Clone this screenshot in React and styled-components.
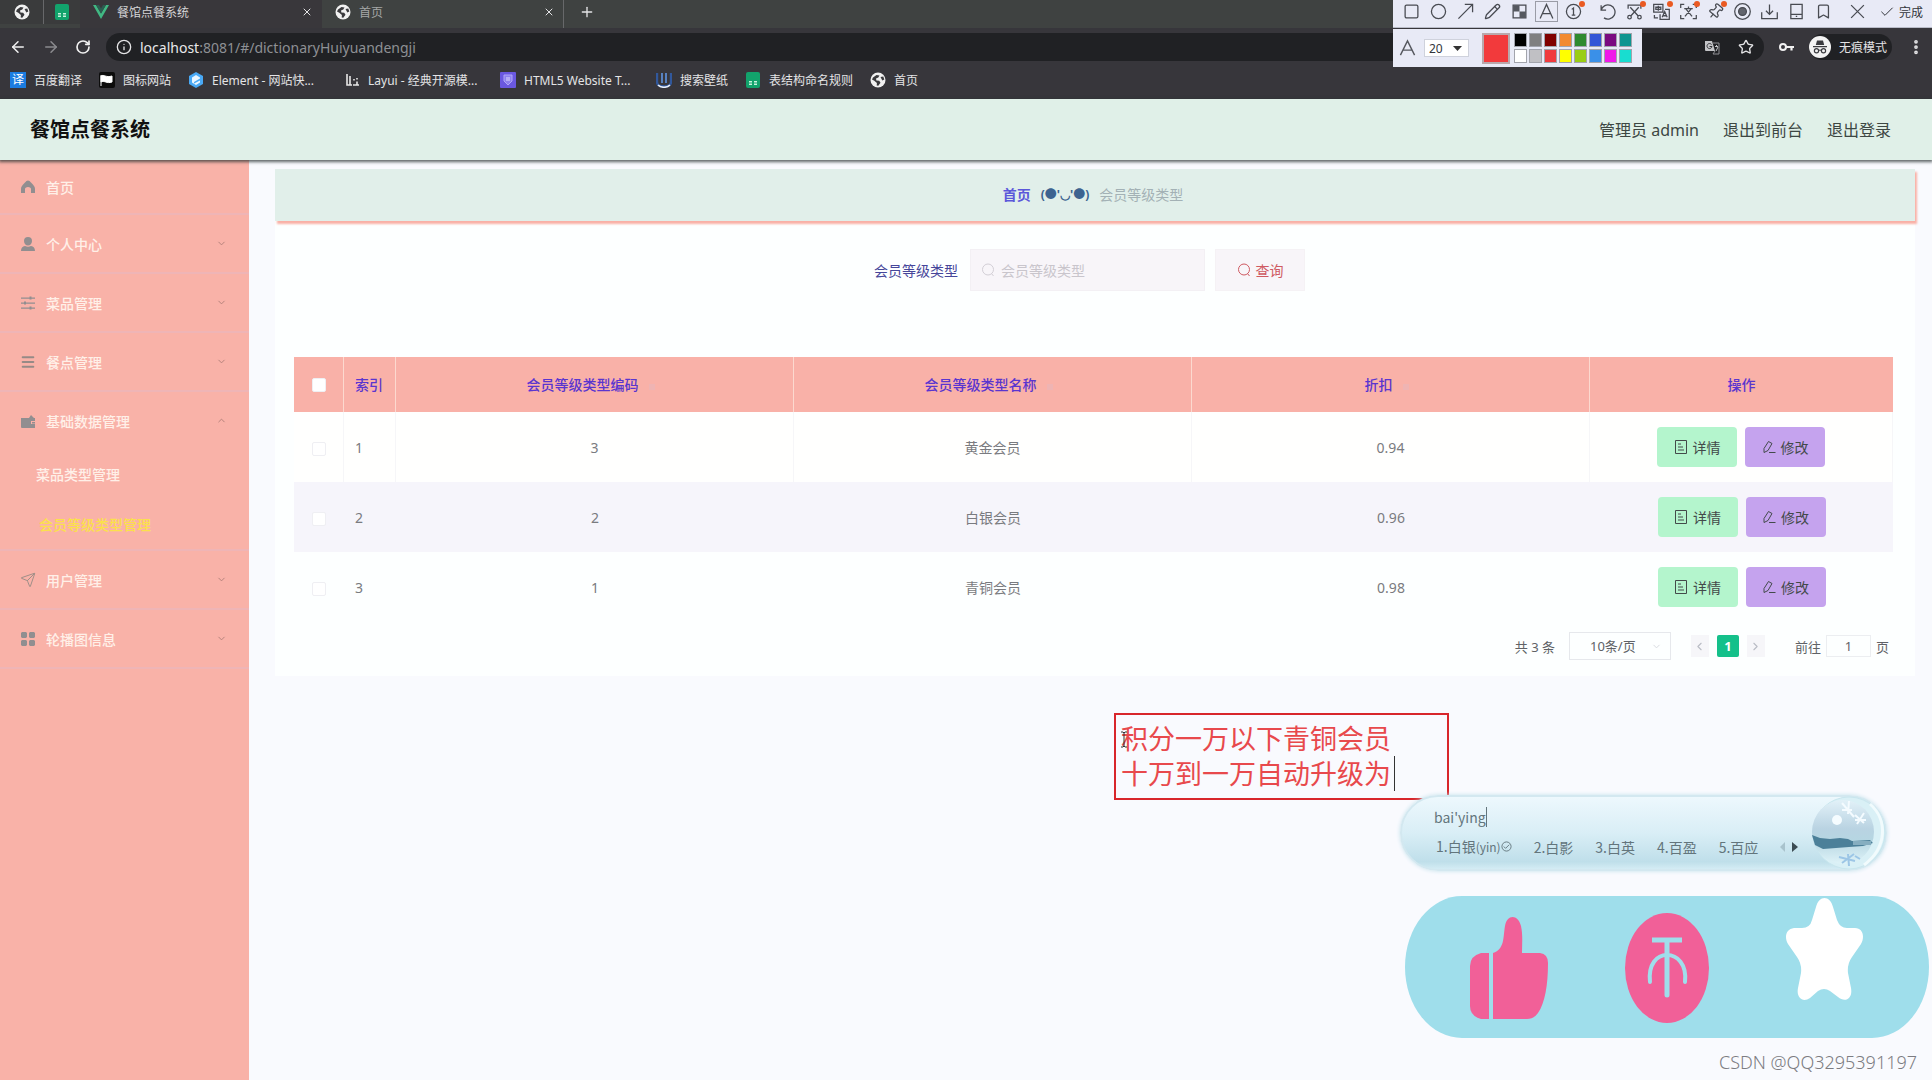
import React, { useState } from 'react';
import styled, { createGlobalStyle } from 'styled-components';
import {
  ArrowLeft,
  ArrowRight,
  Bookmark,
  Check,
  ChevronDown,
  ChevronLeft,
  ChevronRight,
  ChevronUp,
  Circle,
  EllipsisVertical,
  Info,
  Menu,
  Pencil,
  Pin,
  Plus,
  RotateCw,
  Send,
  Square,
  Star,
  X,
} from 'lucide-react';

const bookmarks = [
  { label: '百度翻译', icon: 'fanyi' },
  { label: '图标网站', icon: 'flag' },
  { label: 'Element - 网站快...', icon: 'element', long: true },
  { label: 'Layui - 经典开源模...', icon: 'layui', long: true },
  { label: 'HTML5 Website T...', icon: 'html5', long: true },
  { label: '搜索壁纸', icon: 'wallpaper' },
  { label: '表结构命名规则', icon: 'sheet' },
  { label: '首页', icon: 'globe' },
];

const menu = [
  { label: '首页', icon: 'home' },
  { label: '个人中心', icon: 'user', arrow: true },
  { label: '菜品管理', icon: 'sliders', arrow: true },
  { label: '餐点管理', icon: 'lines', arrow: true },
  {
    label: '基础数据管理',
    icon: 'wallet',
    arrow: true,
    children: ['菜品类型管理', '会员等级类型管理'],
  },
  { label: '用户管理', icon: 'send', arrow: true },
  { label: '轮播图信息', icon: 'grid', arrow: true },
];

const rows = [
  { id: 1, code: 3, name: '黄金会员', discount: '0.94' },
  { id: 2, code: 2, name: '白银会员', discount: '0.96' },
  { id: 3, code: 1, name: '青铜会员', discount: '0.98' },
];

const swatches = [
  '#000000', '#808080', '#800000', '#f28a30', '#2f8a2f', '#3355d6', '#7a0a80', '#0f9590',
  '#ffffff', '#c0c0c4', '#f03a3e', '#ffff00', '#9acd14', '#3a90e8', '#f018e8', '#18ddd0',
];

const tools = [
  { name: '矩形', icon: <Square /> },
  { name: '椭圆', icon: <Circle /> },
  { name: '箭头', icon: <ToolIcon type="arrow" /> },
  { name: '画笔', icon: <Pencil /> },
  { name: '马赛克', icon: <ToolIcon type="mosaic" /> },
  { name: '文字', icon: <ToolIcon type="letter" />, active: true },
  { name: '序号', icon: <ToolIcon type="number" />, dot: true },
  { name: '撤销', icon: <ToolIcon type="undo" />, gap: true },
  { name: '长截图', icon: <ToolIcon type="cut" />, dot: true },
  { name: '翻译', icon: <ToolIcon type="translate" />, dot: true },
  { name: '识别文字', icon: <ToolIcon type="scan" />, dot: true },
  { name: '钉住', icon: <Pin />, dot: true, tilt: true },
  { name: '录屏', icon: <ToolIcon type="record" /> },
  { name: '保存', icon: <ToolIcon type="save" /> },
  { name: '发送到手机', icon: <ToolIcon type="phone" /> },
  { name: '收藏', icon: <Bookmark /> },
  { name: '关闭', icon: <ToolIcon type="close" />, gap: true },
];

function GlobeIcon() {
  return (
    <svg width="16" height="16" viewBox="0 0 16 16">
      <circle cx="8" cy="8" r="7.5" fill="#f1f1f1" />
      <path d="M3 5.500 6.500 3l3 .6-1.200 2L6 6.600l.4 1.800 2.800.4 1.300 2-2.200 3-1.600-.4.2-2.500-2.600-2.100L2 7.500zM10.500 5l2.800-.6 1 3.200-2 .8z" fill="#3a3a3d" />
    </svg>
  );
}

function SheetIcon() {
  return (
    <svg width="16" height="16" viewBox="0 0 16 16">
      <rect x="1" y="0" width="14" height="16" rx="2" fill="#12a36c" />
      <path d="M4 9h3v1.500H4zM9 9h3v1.500H9zM4 11.500h3V13H4zM9 11.500h3V13H9z" fill="#c7f2de" />
    </svg>
  );
}

function BookmarkIcon({ type }) {
  if (type === 'globe') return <GlobeIcon />;
  if (type === 'sheet') return <SheetIcon />;
  if (type === 'fanyi') return <FanyiBadge>译</FanyiBadge>;
  return (
    <svg width="16" height="16" viewBox="0 0 16 16">
      {type === 'flag' && (
        <>
          <rect width="16" height="16" rx="2" fill="#0c0c0c" />
          <path d="M2 3v11M2 4c3-2 5 2 11 0v6c-5 2-8-2-11 0z" fill="#fff" stroke="#fff" />
        </>
      )}
      {type === 'element' && (
        <>
          <path d="M8 0l7 4v8l-7 4-7-4V4z" fill="#49a9f5" />
          <path d="M4 5.500 8 3l4 2.500v1L6 10v1.500l6-3v2L8 13l-4-2.500z" fill="#eaf6ff" />
        </>
      )}
      {type === 'layui' && (
        <path d="M3 2v11h5M6 4v9M9 13h3M10 7v1.500M13 6v1.500M12 13h3M13 9.500V13" stroke="#e6e6e6" strokeWidth="1.6" fill="none" />
      )}
      {type === 'html5' && (
        <>
          <rect width="16" height="16" rx="1" fill="#6a58e0" />
          <path d="M4 3h8v6l-4 4-4-4z" fill="#8d80ee" stroke="#b0a6f8" />
          <path d="M6 6h4M6 8h4" stroke="#e0dcff" />
        </>
      )}
      {type === 'wallpaper' && (
        <>
          <path d="M1 1v9c0 6 14 6 14 0V1" stroke="#31589c" strokeWidth="2.400" fill="none" />
          <path d="M6 1v10M10 1v10" stroke="#5b8ad0" strokeWidth="1.800" />
          <path d="M2 13c3 3 9 3 12 0" stroke="#e8f0fb" strokeWidth="1.600" fill="none" />
        </>
      )}
    </svg>
  );
}

function ToolIcon({ type }) {
  return (
    <svg viewBox="0 0 24 24">
      {type === 'arrow' && <path d="M2 22 22 2M11 2h11v11" />}
      {type === 'mosaic' && (
        <>
          <rect x="3" y="3" width="18" height="18" />
          <path d="M3 3h9v9H3zM12 12h9v9h-9z" fill="#55585f" stroke="none" />
        </>
      )}
      {type === 'letter' && <path d="M3 22 12 2l9 20M6 15h12" />}
      {type === 'number' && (
        <>
          <circle cx="12" cy="12" r="10" />
          <path d="M9.500 9 12 7v10M9.500 17h5" />
        </>
      )}
      {type === 'undo' && <path d="M3 3v7h7M3 10a10 10 0 1 1 4 11" />}
      {type === 'cut' && (
        <>
          <path d="M3 8V3h18v5M6 6l11 12M18 6 7 18" />
          <circle cx="5" cy="20" r="2.500" />
          <circle cx="19" cy="20" r="2.500" />
        </>
      )}
      {type === 'translate' && (
        <path d="M1 2h13v11H1zM7.500 4v7M4 6h7v3H4zM17 9h6v14H10v-7M13 20l3.500-8 3.500 8M14 18h5M2 17v4h5" />
      )}
      {type === 'scan' && (
        <path d="M1 7V2h5M18 2h5v5M23 17v5h-5M6 22H1v-5M6 8h12M12 5v3M16 8 7 19M8 8l9 11" />
      )}
      {type === 'record' && (
        <>
          <circle cx="12" cy="12" r="11" />
          <circle cx="12" cy="12" r="5.500" fill="#62656d" />
        </>
      )}
      {type === 'save' && <path d="M1 13v9h22v-9M12 2v14M7 11l5 5 5-5" />}
      {type === 'phone' && <path d="M4 2h16v20H4zM4 16h16M11 19h2" />}
      {type === 'close' && <path d="M3 3l18 18M21 3 3 21" />}
    </svg>
  );
}

function MenuIcon({ type }) {
  if (type === 'send') return <Send size={16} strokeWidth={1.5} color="#a08f88" />;
  if (type === 'lines') return <Menu size={16} strokeWidth={3} color="#968a86" />;
  return (
    <svg width="16" height="16" viewBox="0 0 16 16" fill="#918e90">
      {type === 'home' && <path d="M8 1.500c1 0 2 .8 3.500 2.500C14 6.500 15 8 15 10v4h-4v-4c0-1-1-2-3-2s-3 1-3 2v4H1v-4c0-2 1-3.500 3.500-6C6 2.300 7 1.500 8 1.500z" />}
      {type === 'user' && <path d="M8 1a4 4 0 0 1 4 4c0 2.500-1.700 4.500-4 4.500S4 7.500 4 5a4 4 0 0 1 4-4zM1 15c0-3 1.500-4.500 4-5 2 1 4 1 6 0 2.500.5 4 2 4 5z" />}
      {type === 'sliders' && <path d="M1 2.500h14v1.200H1zM1 7.500h14v1.200H1zM1 12.500h14v1.200H1zM9.500 1.500h2v3h-2zM4 6.500h2v3H4zM9.500 11.500h2v3h-2z" />}
      {type === 'wallet' && <path d="M1 5h8l2-3 3 3h1v3h-4v3h4v4H2a1 1 0 0 1-1-1zM12 9h3v1.500h-3z" />}
      {type === 'grid' && <path d="M2 1h4l1 1v4l-1 1H2L1 6V2zM10 1h4l1 1v4l-1 1h-4L9 6V2zM2 9h4l1 1v4l-1 1H2l-1-1v-4zM10 9h4l1 1v4l-1 1h-4l-1-1v-4z" />}
    </svg>
  );
}

function SearchIcon() {
  return (
    <svg width="14" height="14" viewBox="0 0 14 14" fill="none" stroke="currentColor">
      <circle cx="7" cy="6.500" r="5.500" />
      <path d="m10.500 10.500 2 2.500" />
    </svg>
  );
}

function DetailIcon() {
  return (
    <svg width="14" height="14" viewBox="0 0 14 14" fill="none" stroke="currentColor">
      <path d="M1.500.5h11v13h-11zM4 4h3M4 7h5M4 10h6" />
    </svg>
  );
}

function EditIcon() {
  return (
    <svg width="14" height="14" viewBox="0 0 14 14" fill="none" stroke="currentColor">
      <path d="M2 8.500 6.500 1.500l3.500 2L6 10.500 2 12.500zM7 12.500h6.500" />
    </svg>
  );
}

function Browser() {
  return (
    <BrowserFrame>
      <TabStrip>
        <PinnedTab $line><GlobeIcon /></PinnedTab>
        <PinnedTab><SheetIcon /></PinnedTab>
        <Tab $active>
          <svg width="16" height="14" viewBox="0 0 16 14">
            <path d="M0 0h3l5 8.500L13 0h3L8 14z" fill="#41b883" />
            <path d="M3 0h3l2 3.500L10 0h3L8 8.500z" fill="#2c5c50" />
          </svg>
          <TabTitle $active>餐馆点餐系统</TabTitle>
          <X size={12} />
        </Tab>
        <Tab>
          <GlobeIcon />
          <TabTitle>首页</TabTitle>
          <X size={12} />
        </Tab>
        <NewTab aria-label="新标签页"><Plus size={16} /></NewTab>
      </TabStrip>
      <Toolbar>
        <NavButton aria-label="后退"><ArrowLeft size={18} /></NavButton>
        <NavButton aria-label="前进" $dim><ArrowRight size={18} /></NavButton>
        <NavButton aria-label="刷新"><RotateCw size={16} strokeWidth={2.5} /></NavButton>
        <AddressBar>
          <Info size={16} />
          <Url><b>localhost</b>:8081/#/dictionaryHuiyuandengji</Url>
          <svg width="15" height="15" viewBox="0 0 15 15">
            <path d="M0 1h7l3 10H1a1 1 0 0 1-1-1z" fill="#c3c4c7" />
            <path d="M8 3h6v11H8l2-3" fill="none" stroke="#8f9094" />
            <path d="M6.500 4.500a2.500 2.500 0 1 0 .5 2H4.500" fill="none" stroke="#303135" />
            <path d="M10 6.500h3M11.500 5v1.500M13 7l-2 4" stroke="#c3c4c7" />
          </svg>
          <Star size={16} />
        </AddressBar>
        <svg width="15" height="10" viewBox="0 0 15 10">
          <circle cx="4" cy="5" r="3" fill="none" stroke="#f1f1f1" strokeWidth="2" />
          <path d="M7 5h8M12.500 5v3.500" stroke="#f1f1f1" strokeWidth="2.200" />
        </svg>
        <Incognito>
          <svg width="22" height="22" viewBox="0 0 22 22">
            <circle cx="11" cy="11" r="11" fill="#f3f3f3" />
            <path d="M8 4.500h6l1.200 4.500H6.800zM4 10h14v1.200H4z" fill="#3a3b3f" />
            <path d="M9.500 14.500q1.500-1 3 0" stroke="#3a3b3f" fill="none" />
            <circle cx="7.500" cy="14.800" r="2.100" stroke="#3a3b3f" strokeWidth="1.200" fill="none" />
            <circle cx="14.500" cy="14.800" r="2.100" stroke="#3a3b3f" strokeWidth="1.200" fill="none" />
          </svg>
          无痕模式
        </Incognito>
        <EllipsisVertical size={18} strokeWidth={3} />
      </Toolbar>
      <BookmarkBar>
        {bookmarks.map((item) => (
          <BookmarkLink key={item.label} href="#" $long={item.long}>
            <BookmarkIcon type={item.icon} />
            <span>{item.label}</span>
          </BookmarkLink>
        ))}
      </BookmarkBar>
    </BrowserFrame>
  );
}

function SnipTools() {
  return (
    <SnipWrap>
      <SnipBar>
        {tools.map((tool) => (
          <SnipButton key={tool.name} aria-label={tool.name} $active={tool.active} $gap={tool.gap} $tilt={tool.tilt}>
            {tool.icon}
            {tool.dot && <Dot />}
          </SnipButton>
        ))}
        <DoneButton><Check size={16} strokeWidth={1.5} />完成</DoneButton>
      </SnipBar>
      <SnipOptions>
        <svg width="17" height="18" viewBox="0 0 24 24" fill="none" stroke="#55585f" strokeWidth="2">
          <path d="M2 22 12 2l10 20M6 15h12" />
        </svg>
        <SizeBox>
          <SizeSelect aria-label="字号" defaultValue="20">
            <option>20</option>
          </SizeSelect>
          <svg width="9" height="5" viewBox="0 0 9 5"><path d="M0 0h9L4.500 5z" fill="#333" /></svg>
        </SizeBox>
        <CurrentColor />
        <Palette>
          {swatches.map((color) => (
            <Swatch key={color} aria-label={color} $color={color} />
          ))}
        </Palette>
      </SnipOptions>
    </SnipWrap>
  );
}

function Sidebar() {
  return (
    <SideNav>
      {menu.map((item, index) => (
        <MenuGroup key={item.label}>
          <MenuLink href="#" $first={index === 0}>
            <MenuIcon type={item.icon} />
            <MenuText>{item.label}</MenuText>
            {item.arrow && (item.children ? <ChevronUp size={11} /> : <ChevronDown size={11} />)}
          </MenuLink>
          {item.children && item.children.map((child, i) => (
            <SubLink key={child} href="#" $active={i === 1}>{child}</SubLink>
          ))}
        </MenuGroup>
      ))}
    </SideNav>
  );
}

function LevelTable() {
  return (
    <Table>
      <colgroup>
        <col width="50" />
        <col width="52" />
        <col />
        <col />
        <col />
        <col width="303" />
      </colgroup>
      <thead>
        <tr>
          <HeadCell><Checkbox type="checkbox" aria-label="全选" /></HeadCell>
          <HeadCell $left>索引</HeadCell>
          <HeadCell>会员等级类型编码<Caret /></HeadCell>
          <HeadCell>会员等级类型名称<Caret /></HeadCell>
          <HeadCell>折扣<Caret /></HeadCell>
          <HeadCell>操作</HeadCell>
        </tr>
      </thead>
      <tbody>
        {rows.map((row) => (
          <BodyRow key={row.id}>
            <Cell><Checkbox type="checkbox" aria-label={`选择 ${row.name}`} /></Cell>
            <Cell $left>{row.id}</Cell>
            <Cell>{row.code}</Cell>
            <Cell>{row.name}</Cell>
            <Cell>{row.discount}</Cell>
            <Cell>
              <Actions>
                <ActionButton $color="#b4f5cd"><DetailIcon />详情</ActionButton>
                <ActionButton $color="#c5a3ee"><EditIcon />修改</ActionButton>
              </Actions>
            </Cell>
          </BodyRow>
        ))}
      </tbody>
    </Table>
  );
}

function Pager() {
  return (
    <Pagination>
      <span>共 3 条</span>
      <PageSize>
        <select aria-label="每页条数" defaultValue="10条/页">
          <option>10条/页</option>
        </select>
        <ChevronDown size={11} color="#d5d8dd" />
      </PageSize>
      <PageArrow aria-label="上一页"><ChevronLeft size={13} /></PageArrow>
      <PageNumber>1</PageNumber>
      <PageArrow aria-label="下一页"><ChevronRight size={13} /></PageArrow>
      <Jump>
        前往
        <input aria-label="页码" defaultValue="1" />
        页
      </Jump>
    </Pagination>
  );
}

function InputMethod() {
  return (
    <ImeBar>
      <ImeText>
        <Composing>bai'ying</Composing>
        <Candidates>
          <span>1.白银<small>(yin)</small>
            <svg width="11" height="11" viewBox="0 0 12 12" fill="none" stroke="#63757c">
              <circle cx="6" cy="6" r="5" />
              <path d="m3 6 2 2 4-4" />
            </svg>
          </span>
          <span>2.白影</span>
          <span>3.白英</span>
          <span>4.百盈</span>
          <span>5.百应</span>
          <svg width="18" height="12" viewBox="0 0 18 12">
            <path d="M5 1v10L0 6z" fill="#a9c3cd" />
            <path d="M12 1v10l6-5z" fill="#3c4c53" />
          </svg>
        </Candidates>
      </ImeText>
      <svg width="76" height="76" viewBox="0 0 76 76">
        <defs>
          <linearGradient id="ball" x1="0" y1="0" x2="0" y2="1">
            <stop offset="0" stopColor="#e2f1f8" />
            <stop offset="0.45" stopColor="#b9d3e2" />
            <stop offset="0.62" stopColor="#b6d6e2" />
            <stop offset="1" stopColor="#dff3f8" />
          </linearGradient>
        </defs>
        <circle cx="38" cy="38" r="36" fill="#d9f0f6" stroke="#c8e6ee" />
        <ellipse cx="32" cy="37" rx="31" ry="32" fill="url(#ball)" />
        <path d="M1 40 9 43l10 1 10-1 8 1 4 2 18-1 3 3-10 3-14 1-26 2L4 50z" fill="#4c8099" />
        <path d="M42 46h18v4H42z" fill="#86aec0" />
        <circle cx="26" cy="25" r="5" fill="#f5fcff" />
        <g stroke="#f4fbff" strokeWidth="2" fill="none">
          <path d="m31 8 12 14M38 6l-1 13M31 15l10 0M44 20l9 8M53 18l-7 11M44 25h11" />
        </g>
        <path d="m28 62 16 4M31 68l12-9M37 59l1 12M44 61l5 3" stroke="#9cc6e6" strokeWidth="2" />
        <path d="M59 9c18 16 17 44-6 61" stroke="#f1fbfd" strokeWidth="3" fill="none" />
      </svg>
    </ImeBar>
  );
}

function LikePanel() {
  return (
    <Reactions>
      <ReactionButton aria-label="点赞">
        <svg width="78" height="102" viewBox="0 0 78 102" fill="#f16098">
          <path d="M11 36h8v66h-8Q0 99 0 89V49Q0 39 11 36z" />
          <path d="M23 36c12-4 10-16 12-27C37-3 48-3 51 9c2 9 1 18 1 27h18q8 1 8 10c0 22-3 40-10 50q-4 6-11 6H23z" />
        </svg>
      </ReactionButton>
      <ReactionButton aria-label="投币">
        <svg width="84" height="110" viewBox="0 0 84 110">
          <ellipse cx="42" cy="55" rx="42" ry="55" fill="#f16098" />
          <g stroke="#9fdeeb" fill="none">
            <path d="M27 27h30" strokeWidth="5" />
            <path d="M42 28v54" strokeWidth="5" strokeLinecap="round" />
            <path d="M25 69c-2-18 7-27 17-27s20 9 18 27" strokeWidth="4" strokeLinecap="round" />
          </g>
        </svg>
      </ReactionButton>
      <ReactionButton aria-label="收藏" $raised>
        <svg width="77" height="103" viewBox="0 0 77 103" fill="#fff">
          <path d="M30 9c3-12 14-12 17 0l4 13q3 8 10 8h8c8 0 10 9 6 16l-9 13q-5 7-4 16l3 15c2 11-6 15-13 9l-8-6q-6-4-12 0l-8 7c-7 5-14 0-12-10l3-15q1-9-4-16L2 46c-4-7-2-15 6-16h8q8 0 10-8z" />
        </svg>
      </ReactionButton>
    </Reactions>
  );
}

function App() {
  const [keyword, setKeyword] = useState('');
  const [note, setNote] = useState('积分一万以下青铜会员\n十万到一万自动升级为');

  return (
    <Screen>
      <GlobalStyle />
      <Browser />
      <Header>
        <Brand>餐馆点餐系统</Brand>
        <HeaderLinks>
          <span>管理员 admin</span>
          <a href="#">退出到前台</a>
          <a href="#">退出登录</a>
        </HeaderLinks>
      </Header>
      <Body>
        <Sidebar />
        <Main>
          <Breadcrumb>
            <a href="#">首页</a>
            <Face>(●'◡'●)</Face>
            <span>会员等级类型</span>
          </Breadcrumb>
          <Card>
            <SearchForm onSubmit={(e) => e.preventDefault()}>
              <label htmlFor="levelName">会员等级类型</label>
              <SearchField>
                <SearchIcon />
                <input
                  id="levelName"
                  placeholder="会员等级类型"
                  value={keyword}
                  onChange={(e) => setKeyword(e.target.value)}
                />
              </SearchField>
              <SearchButton type="submit"><SearchIcon />查询</SearchButton>
            </SearchForm>
            <LevelTable />
            <Pager />
          </Card>
        </Main>
      </Body>
      <NoteBox>
        <textarea aria-label="标注文字" rows={2} value={note} onChange={(e) => setNote(e.target.value)} />
        <TextCursor width="8" height="17" viewBox="0 0 8 17" fill="none" stroke="#333">
          <path d="M1 1h2l1 1 1-1h2M4 2v13M1 16h2l1-1 1 1h2" />
        </TextCursor>
        <Blink />
      </NoteBox>
      <SnipTools />
      <InputMethod />
      <LikePanel />
      <Watermark>CSDN @QQ3295391197</Watermark>
    </Screen>
  );
}

const GlobalStyle = createGlobalStyle`
  * {
    box-sizing: border-box;
  }
  body {
    margin: 0;
    font-family: 'Noto Sans', 'Noto Sans CJK SC', sans-serif;
    font-size: 14px;
    color: #606266;
    background: #f9fafe;
  }
  a {
    color: inherit;
    text-decoration: none;
  }
  button, input, select, textarea {
    font: inherit;
    color: inherit;
    border: none;
    background: none;
    padding: 0;
    margin: 0;
    outline: none;
  }
  select {
    appearance: none;
  }
  svg {
    flex: none;
  }
`;
const Screen = styled.div`
  position: relative;
  display: flex;
  flex-direction: column;
  min-height: 100vh;
  overflow: hidden;
`;
const BrowserFrame = styled.div`
  background: #37363b;
  color: #e4e4e6;
  font-size: 12px;
`;
const TabStrip = styled.div`
  display: flex;
  align-items: center;
  height: 28px;
  padding-bottom: 4px;
  background: #3f4241;
`;
const PinnedTab = styled.div`
  display: flex;
  justify-content: center;
  align-items: center;
  width: ${(props) => (props.$line ? '44px' : '36px')};
  height: 24px;
  border-right: 1px solid ${(props) => (props.$line ? '#67686a' : 'transparent')};
  background: #3a3b3c;
`;
const Tab = styled.div`
  display: flex;
  align-items: center;
  gap: 8px;
  width: 242px;
  height: 28px;
  padding: 0 8px 4px 13px;
  margin-bottom: -4px;
  background: ${(props) => (props.$active ? '#39373b' : '#3f4241')};
  border-right: 1px solid ${(props) => (props.$active ? 'transparent' : '#67686a')};
`;
const TabTitle = styled.span`
  flex: 1;
  color: ${(props) => (props.$active ? '#d5d5d7' : '#a5a7a6')};
`;
const NewTab = styled.button`
  display: flex;
  padding: 0 15px;
`;
const Toolbar = styled.div`
  display: flex;
  align-items: center;
  height: 38px;
  padding: 0 7px 0 9px;
  gap: 15px;
`;
const NavButton = styled.button`
  display: flex;
  color: ${(props) => (props.$dim ? '#8b8b8f' : '#f1f1f1')};
`;
const AddressBar = styled.div`
  display: flex;
  align-items: center;
  flex: 1;
  gap: 8px;
  height: 28px;
  padding: 0 10px;
  border-radius: 14px;
  background: #202124;

  svg:last-child {
    margin-left: 10px;
  }
`;
const Url = styled.span`
  flex: 1;
  font-size: 14px;
  color: #8e9094;

  b {
    font-weight: 400;
    color: #e8e8ea;
  }
`;
const Incognito = styled.div`
  display: flex;
  align-items: center;
  gap: 8px;
  height: 26px;
  padding-right: 5px;
  border-radius: 13px;
  background: #202124;
`;
const BookmarkBar = styled.nav`
  display: flex;
  align-items: center;
  gap: 17px;
  height: 33px;
  padding: 0 10px 5px;
`;
const BookmarkLink = styled.a`
  display: flex;
  align-items: center;
  gap: 8px;
  width: ${(props) => (props.$long ? '139px' : 'auto')};
  white-space: nowrap;
`;
const FanyiBadge = styled.i`
  width: 16px;
  height: 16px;
  font-style: normal;
  font-size: 12px;
  line-height: 16px;
  text-align: center;
  color: #fff;
  background: #1b7ce0;
`;
const Header = styled.header`
  position: relative;
  z-index: 1;
  display: flex;
  align-items: center;
  justify-content: space-between;
  height: 61px;
  padding: 0 41px 2px 30px;
  background: #e0f0e8;
  box-shadow: 0 1px 3px 1px rgba(40, 50, 50, 0.75);
`;
const Brand = styled.h1`
  margin: 0;
  font-size: 20px;
  font-weight: 700;
  color: #111;
`;
const HeaderLinks = styled.div`
  display: flex;
  gap: 24px;
  font-size: 16px;
  color: #3d4743;
`;
const Body = styled.div`
  display: flex;
  flex: 1;
`;
const SideNav = styled.nav`
  width: 249px;
  background: #f9b2a8;
`;
const MenuGroup = styled.div`
  border-bottom: 2px solid #efb5b6;
`;
const MenuLink = styled.a`
  display: flex;
  align-items: center;
  gap: 10px;
  height: ${(props) => (props.$first ? '53px' : '57px')};
  padding: 0 22px 0 20px;
  color: #b07f78;
`;
const MenuText = styled.span`
  flex: 1;
  font-weight: 500;
  color: #fff0e8;
`;
const SubLink = styled.a`
  display: flex;
  align-items: center;
  height: 50px;
  padding-left: ${(props) => (props.$active ? '39px' : '36px')};
  font-weight: 500;
  color: ${(props) => (props.$active ? '#fbe04c' : '#fff0e8')};
`;
const Main = styled.main`
  flex: 1;
  min-width: 0;
  padding: 9px 17px 0 26px;
`;
const Breadcrumb = styled.div`
  position: relative;
  display: flex;
  justify-content: center;
  align-items: center;
  gap: 10px;
  height: 52px;
  padding: 0 4px 2px 0;
  background: #e1efea;
  box-shadow: 2px 3px 2px #f9b0a6;
  color: #a3b1b5;

  a {
    font-weight: 700;
    color: #5b57da;
  }
`;
const Face = styled.b`
  font-size: 12px;
  color: #3d6390;
`;
const Card = styled.section`
  padding: 28px 22px 16px 19px;
  background: #fdffff;
`;
const SearchForm = styled.form`
  display: flex;
  justify-content: center;
  align-items: center;
  gap: 10px;
  padding-right: 8px;
  margin-bottom: 66px;

  label {
    color: #46469a;
    padding-right: 2px;
  }
`;
const SearchField = styled.div`
  display: flex;
  align-items: center;
  gap: 6px;
  width: 235px;
  height: 42px;
  padding: 0 10px;
  border: 1px solid #f3f0f4;
  background: #f8f5f9;
  color: #d3cfd6;

  input {
    flex: 1;
    min-width: 0;
    color: #606266;
  }
  input::placeholder {
    color: #c9c5cc;
  }
`;
const SearchButton = styled.button`
  display: flex;
  justify-content: center;
  align-items: center;
  gap: 5px;
  width: 90px;
  height: 42px;
  border: 1px solid #f5f2f5;
  background: #f8f5f9;
  color: #cf5a62;
`;
const Table = styled.table`
  width: 100%;
  table-layout: fixed;
  border-spacing: 0;
`;
const HeadCell = styled.th`
  height: 55px;
  padding: 0 10px 2px;
  padding-left: ${(props) => (props.$left ? '11px' : '10px')};
  text-align: ${(props) => (props.$left ? 'left' : 'center')};
  font-weight: 500;
  color: #5a35cf;
  background: #f9b1a8;
  border-right: 1px solid #fcd9cf;

  &:last-child {
    border-right: none;
  }
`;
const Caret = styled.i`
  display: inline-block;
  width: 24px;
  height: 6px;

  &::before {
    content: '';
    display: block;
    width: 6px;
    height: 6px;
    margin-left: 10px;
    background: #efb4b3;
  }
`;
const BodyRow = styled.tr`
  background: #fffffe;

  &:nth-child(2) {
    background: #f6f5fb;
  }
  &:nth-child(3) {
    background: #fdffff;
  }
`;
const Cell = styled.td`
  height: 70px;
  padding: 0 10px;
  padding-left: ${(props) => (props.$left ? '11px' : '10px')};
  text-align: ${(props) => (props.$left ? 'left' : 'center')};
  color: #7a7b80;

  ${BodyRow}:first-child & {
    border-right: 1px solid #f6f6f8;
  }
`;
const Checkbox = styled.input`
  appearance: none;
  display: inline-block;
  width: 14px;
  height: 14px;
  vertical-align: middle;
  border: 1px solid #efeff3;
  border-radius: 2px;
  background: #fff;
`;
const Actions = styled.div`
  display: flex;
  justify-content: center;
  gap: 8px;
`;
const ActionButton = styled.button`
  display: flex;
  justify-content: center;
  align-items: center;
  gap: 5px;
  width: 80px;
  height: 40px;
  border-radius: 4px;
  background: ${(props) => props.$color};
  color: #434a4a;
`;
const Pagination = styled.div`
  display: flex;
  justify-content: flex-end;
  align-items: center;
  padding: 10px 4px 0 0;
  font-size: 13px;
`;
const PageSize = styled.div`
  display: flex;
  align-items: center;
  width: 102px;
  height: 28px;
  margin: 0 20px 0 14px;
  padding: 0 8px 0 20px;
  border: 1px solid #e6e8ec;

  select {
    flex: 1;
  }
`;
const PageArrow = styled.button`
  display: flex;
  justify-content: center;
  align-items: center;
  width: 18px;
  height: 22px;
  background: #f6f6f9;
  color: #b9bcc4;
`;
const PageNumber = styled.button`
  width: 22px;
  height: 22px;
  margin: 0 8px;
  border-radius: 2px;
  font-weight: 700;
  color: #fff;
  background: #14c08a;
`;
const Jump = styled.label`
  display: flex;
  align-items: center;
  gap: 5px;
  margin-left: 30px;

  input {
    width: 45px;
    height: 22px;
    text-align: center;
    border: 1px solid #eceef1;
  }
`;
const NoteBox = styled.div`
  position: absolute;
  top: 713px;
  right: 483px;
  width: 335px;
  height: 87px;
  padding: 6px 5px;
  border: 2px solid #d8262b;

  textarea {
    display: block;
    width: 100%;
    resize: none;
    overflow: hidden;
    font-size: 27px;
    line-height: 35px;
    color: #e8494c;
  }
`;
const TextCursor = styled.svg`
  position: absolute;
  top: 16px;
  left: 4px;
`;
const Blink = styled.i`
  position: absolute;
  top: 41px;
  left: 278px;
  width: 1px;
  height: 35px;
  background: #333;
`;
const SnipWrap = styled.div`
  position: absolute;
  top: 0;
  right: 0;
  width: 539px;
  font-size: 12px;
  color: #33363c;
`;
const SnipBar = styled.div`
  display: flex;
  align-items: center;
  height: 28px;
  padding: 0 9px 4px 5px;
  background: #e8eaf6;
  border-bottom: 1px solid #b9bcc8;
`;
const SnipButton = styled.button`
  position: relative;
  display: flex;
  justify-content: center;
  align-items: center;
  width: 23px;
  height: 21px;
  margin: 0 2px;
  margin-left: ${(props) => (props.$gap ? '9px' : '2px')};
  border: 1px solid ${(props) => (props.$active ? '#9a9ca6' : 'transparent')};

  svg {
    width: 17px;
    height: 17px;
    fill: none;
    stroke: #484b52;
    stroke-width: 1.8;
    transform: rotate(${(props) => (props.$tilt ? '40deg' : '0deg')});
  }
`;
const Dot = styled.i`
  position: absolute;
  top: -1px;
  right: -1px;
  width: 6px;
  height: 6px;
  border-radius: 50%;
  background: #ea5a22;
`;
const DoneButton = styled.button`
  display: flex;
  align-items: center;
  gap: 4px;
  margin-left: auto;
`;
const SnipOptions = styled.div`
  display: flex;
  align-items: center;
  width: 249px;
  height: 38px;
  margin-top: 1px;
  padding: 0 6px;
  background: #e8eaf6;
`;
const SizeBox = styled.div`
  display: flex;
  align-items: center;
  width: 45px;
  height: 18px;
  margin: 0 13px 0 8px;
  padding: 0 6px 0 4px;
  border: 1px solid #cfd2dc;
  background: #fff;
`;
const SizeSelect = styled.select`
  flex: 1;
  min-width: 0;
`;
const CurrentColor = styled.div`
  width: 28px;
  height: 31px;
  margin-right: 4px;
  border: 2px solid #b9a8ac;
  background: #f23a3c;
`;
const Palette = styled.div`
  display: grid;
  grid-template-columns: repeat(8, 13px);
  gap: 2px;
`;
const Swatch = styled.button`
  height: 14px;
  border: 1px solid #a2a4ac;
  background: ${(props) => props.$color};
`;
const ImeBar = styled.div`
  position: absolute;
  top: 795px;
  right: 45px;
  display: flex;
  justify-content: space-between;
  width: 487px;
  height: 76px;
  padding-left: 34px;
  border-radius: 38px;
  border: 2px solid #d3e8f0;
  background: linear-gradient(#edf8fd 0%, #d9eef6 50%, #bfdfea 90%, #d4ecf4 100%);
  box-shadow: 0 0 4px #c3e1eb;

  > svg {
    margin: -2px;
  }
`;
const ImeText = styled.div`
  font-family: 'Noto Sans CJK SC', sans-serif;
  color: #63757c;
  white-space: nowrap;
`;
const Composing = styled.div`
  width: max-content;
  margin: 10px 0 9px -2px;
  line-height: 20px;
  border-right: 1px solid #63757c;
`;
const Candidates = styled.div`
  display: flex;
  align-items: center;
  gap: 22px;
  line-height: 20px;

  small {
    font-size: 12px;
  }
`;
const Reactions = styled.div`
  position: absolute;
  top: 896px;
  right: 3px;
  display: flex;
  justify-content: space-between;
  width: 524px;
  height: 142px;
  padding: 0 66px 0 65px;
  border-radius: 57px / 71px;
  background: #9fdeeb;
`;
const ReactionButton = styled.button`
  display: flex;
  align-items: ${(props) => (props.$raised ? 'flex-start' : 'center')};
  padding-top: 2px;
`;
const Watermark = styled.div`
  position: absolute;
  right: 15px;
  top: 1048px;
  font-size: 18px;
  font-weight: 300;
  line-height: 28px;
  color: #7c7c82;
`;

export default App;
